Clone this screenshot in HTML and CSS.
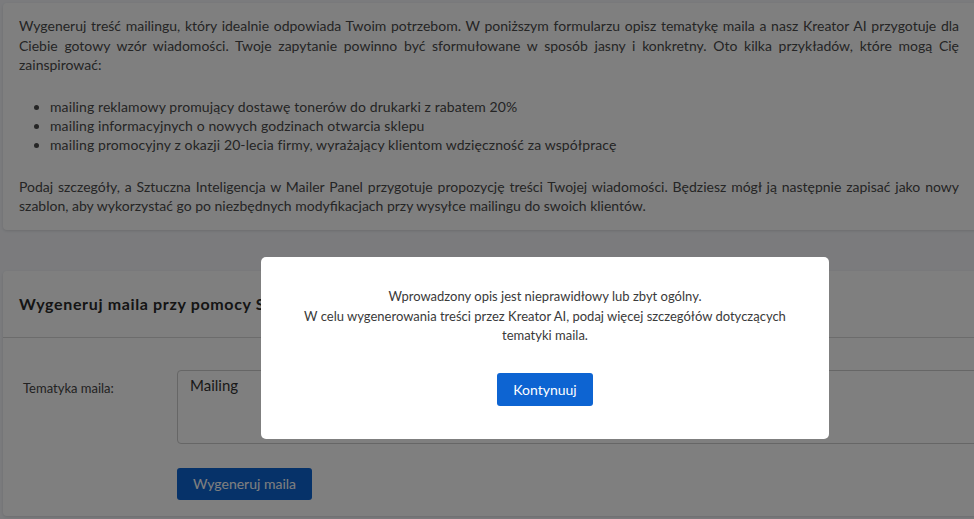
FILE: index.html
```html
<!DOCTYPE html>
<html lang="pl">
<head>
    <meta charset="UTF-8">
    <meta name="viewport" content="width=device-width, initial-scale=1.0">
    <title>Kreator AI - Mailer Panel</title>
    <link rel="stylesheet" href="styles.css">
</head>
<body>
    <div class="page">
        <div class="card intro">
            <p class="lead">Wygeneruj treść mailingu, który idealnie odpowiada Twoim potrzebom. W poniższym formularzu opisz tematykę maila a nasz Kreator AI przygotuje dla Ciebie gotowy wzór wiadomości. Twoje zapytanie powinno być sformułowane w sposób jasny i konkretny. Oto kilka przykładów, które mogą Cię zainspirować:</p>
            <ul class="examples">
                <li>mailing reklamowy promujący dostawę tonerów do drukarki z rabatem 20%</li>
                <li>mailing informacyjnych o nowych godzinach otwarcia sklepu</li>
                <li>mailing promocyjny z okazji 20-lecia firmy, wyrażający klientom wdzięczność za współpracę</li>
            </ul>
            <p class="lead">Podaj szczegóły, a Sztuczna Inteligencja w Mailer Panel przygotuje propozycję treści Twojej wiadomości. Będziesz mógł ją następnie zapisać jako nowy szablon, aby wykorzystać go po niezbędnych modyfikacjach przy wysyłce mailingu do swoich klientów.</p>
        </div>

        <div class="card generator">
            <div class="card-header">
                <h2>Wygeneruj maila przy pomocy Sztucznej Inteligencji</h2>
            </div>
            <form class="card-body">
                <div class="form-row">
                    <label for="topic">Tematyka maila:</label>
                    <textarea id="topic" name="topic" rows="3">Mailing</textarea>
                </div>
                <div class="form-row">
                    <span class="spacer"></span>
                    <button type="submit" class="btn">Wygeneruj maila</button>
                </div>
            </form>
        </div>
    </div>

    <!-- Modal with validation message -->
    <div class="overlay"></div>
    <div class="modal">
        <p>Wprowadzony opis jest nieprawidłowy lub zbyt ogólny.<br>
        W celu wygenerowania treści przez Kreator AI, podaj więcej szczegółów dotyczących<br>
        tematyki maila.</p>
        <button type="button" class="btn">Kontynuuj</button>
    </div>
</body>
</html>
```

FILE: styles.css
```css
html, body {
    margin: 0;
    overflow: hidden;
}
body {
    background-color: #f6f7fb;
    font-family: Lato, "Noto Sans", Arial, sans-serif;
    font-size: 14px;
    color: #4a4a4a;
}
.page {
    width: 1000px;
    padding: 3px;
}
.card {
    background: #fff;
    border-radius: 4px;
    box-shadow: 0 1px 3px rgba(0, 0, 0, 0.12);
}
.intro {
    padding: 13px 44px 14px 16px;
}
.lead {
    margin: 0;
    line-height: 19.5px;
    text-align: justify;
}
.examples {
    margin: 22px 0 23px;
    padding-left: 31px;
    line-height: 19px;
    letter-spacing: 0.1px;
}
.generator {
    margin-top: 41px;
}
.card-header {
    padding: 23px 16px;
    border-bottom: 1px solid #d9d9d9;
}
.card-header h2 {
    margin: 0;
    font-size: 16px;
    line-height: 20px;
    font-weight: 700;
    letter-spacing: 0.65px;
    color: #2a2a2a;
    white-space: nowrap;
}
.card-body {
    padding: 32px 20px 16px;
}
.form-row {
    display: flex;
    align-items: flex-start;
}
.form-row + .form-row {
    margin-top: 24px;
}
label, .spacer {
    width: 154px;
    flex: none;
}
label {
    padding-top: 10px;
    font-size: 13px;
    color: #444;
}
textarea {
    flex: 1;
    height: 74px;
    box-sizing: border-box;
    padding: 5px 12px;
    border: 1px solid #ccc;
    border-radius: 4px;
    font-family: inherit;
    font-size: 15px;
    color: #333;
    resize: none;
}
.btn {
    padding: 0 16px;
    height: 32px;
    background: #0d64d2;
    color: #fff;
    border: none;
    border-radius: 3px;
    font-family: inherit;
    font-size: 14px;
    cursor: pointer;
}
.overlay {
    position: fixed;
    inset: 0;
    background: rgba(0, 0, 0, 0.5);
}
.modal {
    position: fixed;
    left: 261px;
    top: 257px;
    width: 568px;
    height: 182px;
    box-sizing: border-box;
    padding-top: 30px;
    background: #fff;
    border-radius: 5px;
    text-align: center;
}
.modal p {
    margin: 0 0 27px;
    font-size: 13px;
    line-height: 19.5px;
    color: #3a3a3a;
}
.modal .btn {
    width: 96px;
    height: 33px;
    padding: 0;
}
```
